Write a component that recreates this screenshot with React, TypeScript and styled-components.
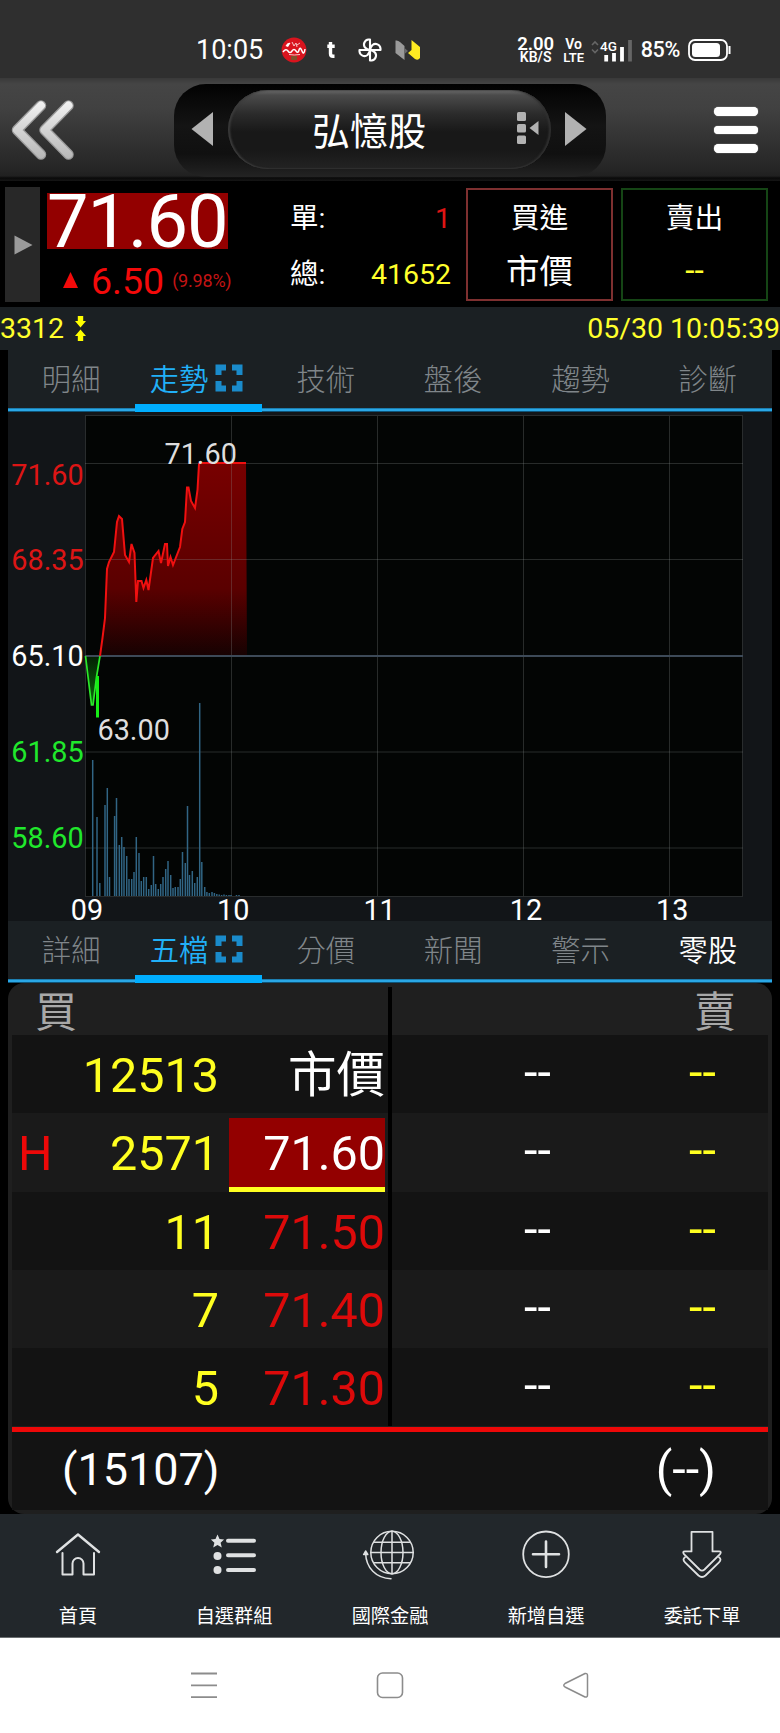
import React from "react";
import styled, { createGlobalStyle } from "styled-components";

const Global = createGlobalStyle`
  * { box-sizing: border-box; }
  body {
    margin: 0;
    background: #000;
    color: #fff;
    font-family: Roboto, "Noto Sans CJK TC", sans-serif;
  }
  svg { display: block; flex: none; overflow: visible; }
`;

const Screen = styled.div`
  width: 780px;
  height: 1733px;
  display: flex;
  flex-direction: column;
  background: #000;
  overflow: hidden;
`;

/* ---------- status bar ---------- */

const StatusBar = styled.div`
  height: 78px;
  flex: none;
  display: flex;
  align-items: center;
  justify-content: space-between;
  padding: 22px 49px 0 196px;
  background: #2f2f2f;
`;

const StatusGroup = styled.div<{ $gap: number }>`
  display: flex;
  align-items: center;
  gap: ${(p) => p.$gap}px;
`;

const Clock = styled.span`
  font-size: 27px;
  line-height: 30px;
  width: 68px;
  margin-right: 5px;
`;

const Stacked = styled.div<{ $top: number; $bottom: number; $width: number }>`
  width: ${(p) => p.$width}px;
  display: flex;
  flex-direction: column;
  align-items: center;
  font-weight: 600;
  white-space: nowrap;
  span:first-child { font-size: ${(p) => p.$top}px; line-height: 14px; }
  span:last-child { font-size: ${(p) => p.$bottom}px; line-height: 13px; }
`;

const BatteryText = styled.span`
  font-size: 21.5px;
  font-weight: 500;
  line-height: 26px;
  letter-spacing: -0.3px;
  margin-right: 2px;
`;

/* ---------- title bar ---------- */

const TitleBar = styled.header`
  height: 103px;
  flex: none;
  display: flex;
  align-items: flex-start;
  padding: 6px 20px 0 9px;
  background: linear-gradient(#393939 0, #454545 6px, #414141 30px, #252525 92px, #202020 98px, #0a0a0a 100px, #151515 103px);
`;

const BackIcon = styled.div`
  width: 165px;
  padding-top: 15px;
`;

const Selector = styled.div`
  width: 432px;
  height: 93px;
  padding: 6px 19px 0 17px;
  border-radius: 32px;
  display: flex;
  justify-content: space-between;
  background: linear-gradient(#020202, #141414 45%, #101010 75%, #232323);
`;

const ArrowSlot = styled.div`
  padding-top: 21px;
`;

const NamePill = styled.div`
  width: 323px;
  height: 79px;
  border-radius: 40px;
  padding: 0 10px 3px 84px;
  margin-left: 1px;
  display: flex;
  align-items: center;
  justify-content: space-between;
  font-size: 38px;
  background: linear-gradient(#6b6b6b 0, #4b4b4b 5px, #2b2b2b 24px, #181818 42px, #181818 60px, #232323);
  box-shadow: inset 2px 0 2px #3b3b3b, inset -2px 0 2px #303030, inset 0 -1px 1px #2c2c2c;
`;

const Hamburger = styled.div`
  width: 44px;
  margin-left: auto;
  padding-top: 23px;
  margin-right: 2px;
  display: flex;
  flex-direction: column;
  gap: 10px;
  span { height: 8.5px; border-radius: 5px; background: #fff; box-shadow: 0 0 1px #fff; }
`;

/* ---------- quote ---------- */

const Quote = styled.section`
  height: 126px;
  flex: none;
  display: flex;
  padding: 6px 12px 5px 5px;
`;

const Expander = styled.div`
  width: 35px;
  height: 115px;
  display: flex;
  align-items: center;
  justify-content: center;
  padding-left: 2px;
  background: #282828;
`;

const PriceColumn = styled.div`
  width: 181px;
  margin: 6px 0 0 7px;
`;

const LastPrice = styled.div`
  height: 56px;
  background: #930000;
  font-size: 74px;
  line-height: 58px;
  letter-spacing: -1.1px;
  white-space: nowrap;
`;

const Change = styled.div`
  height: 64px;
  display: flex;
  align-items: center;
  color: #f40a0a;
  font-size: 37.5px;
  line-height: 44px;
  padding-left: 16px;
  white-space: nowrap;
  svg { margin: 0 13px 3px 0; }
  small { color: #c41414; font-size: 18px; margin-left: 8px; letter-spacing: -0.2px; }
`;

const Volumes = styled.div`
  width: 161px;
  margin-left: 62px;
  padding-top: 3px;
  font-size: 28.5px;
`;

const VolumeRow = styled.div<{ $color: string }>`
  height: 56px;
  display: flex;
  justify-content: space-between;
  line-height: 57px;
  span:last-child { color: ${(p) => p.$color}; }
`;

const TradeBox = styled.div<{ $border: string; $left: number }>`
  width: 147px;
  height: 113px;
  margin: 1px 0 0 ${(p) => p.$left}px;
  border: 2px solid ${(p) => p.$border};
  display: flex;
  flex-direction: column;
  align-items: center;
`;

const TradeTitle = styled.div`
  font-size: 28.8px;
  line-height: 57px;
  height: 53px;
`;

const TradeValue = styled.div<{ $yellow?: boolean }>`
  font-size: 33.5px;
  line-height: ${(p) => (p.$yellow ? 55 : 58)}px;
  color: ${(p) => (p.$yellow ? "#ffff2c" : "#fff")};
`;

const InfoBar = styled.div`
  height: 43px;
  flex: none;
  display: flex;
  align-items: center;
  background: #1b2023;
  color: #ffff2c;
  font-size: 28.5px;
  line-height: 41px;
  svg { margin-left: 11px; }
  time { margin-left: auto; }
`;

/* ---------- tabs ---------- */

const Tabs = styled.nav`
  height: 62px;
  flex: none;
  margin: 0 8px;
  display: grid;
  grid-template-columns: repeat(6, 1fr);
  background: linear-gradient(#1b2023 58px, #0f5478 58px, #2aa7e6 59px, #2aa7e6 61px, #0f5478 61px);
`;

const Tab = styled.div<{ $state: "off" | "on" | "bright" }>`
  height: 62px;
  display: flex;
  justify-content: center;
  align-items: center;
  gap: 7px;
  font-size: 29.3px;
  line-height: 40px;
  font-weight: ${(p) => (p.$state === "off" ? 300 : 350)};
  padding: 0 1px 3px 0;
  color: ${(p) => ({ off: "#80868a", on: "#21b0f8", bright: "#fff" })[p.$state]};
  ${(p) => p.$state === "on" && "padding: 5px 4px 0 0; border-bottom: 8px solid #00aeff; margin-right: 1px;"}
  svg { margin-top: -3px; }
`;

/* ---------- chart ---------- */

const ChartPanel = styled.section`
  height: 509px;
  flex: none;
  margin: 0 8px;
  background: #121518;
`;

/* ---------- order book ---------- */

const Book = styled.section`
  height: 531px;
  flex: none;
  margin: 0 8px;
  padding: 0 4px 4px;
  border-radius: 16px;
  background: #1f1f1f;
`;

const BookHead = styled.div`
  height: 52px;
  display: flex;
  font-size: 42px;
  line-height: 60px;
  color: #a8a8a8;
`;

const HeadSide = styled.div<{ $right?: boolean }>`
  flex: 1;
  height: 52px;
  padding: 0 32px 0 23px;
  text-align: ${(p) => (p.$right ? "right" : "left")};
`;

const HeadDivider = styled.div`
  width: 4px;
  margin-top: 4px;
  background: #000;
`;

const BookRow = styled.div<{ $alt: boolean }>`
  height: 78.3px;
  display: grid;
  grid-template-rows: 78.3px;
  grid-template-columns: 60px 147px 10px 156px 3px 4px 220px 156px;
  background: ${(p) => (p.$alt ? "#1a1a1a" : "#131313")};
  font-size: 48.5px;
  line-height: 82px;
`;

const Mark = styled.div`
  color: #ee0808;
  padding-left: 6px;
`;

const Amount = styled.div`
  color: #ffff20;
  text-align: right;
`;

const Price = styled.div<{ $kind: "market" | "hit" | "up" }>`
  text-align: right;
  color: ${(p) => (p.$kind === "up" ? "#dc0a0a" : "#fff")};
  ${(p) => p.$kind === "hit" && "margin-top: 5px; line-height: 72px; background: #930000; border-bottom: 5px solid #ffff20;"}
`;

const Divider = styled.div`
  background: #000;
`;

const Dash = styled.div<{ $yellow?: boolean }>`
  line-height: 75px;
  padding-left: ${(p) => (p.$yellow ? 77 : 71)}px;
  text-align: ${(p) => (p.$yellow ? "left" : "center")};
  color: ${(p) => (p.$yellow ? "#ffff20" : "#fff")};
`;

const Totals = styled.div`
  height: 83.5px;
  border-top: 5px solid #ee0808;
  margin-top: 0.5px;
  background: #131313;
  display: flex;
  justify-content: space-between;
  padding: 0 52px 0 50px;
  font-size: 45px;
  line-height: 75px;
  span:last-child { font-size: 48.5px; }
`;

/* ---------- bottom navigation ---------- */

const AppNav = styled.nav`
  height: 124px;
  flex: none;
  display: grid;
  grid-template-columns: repeat(5, 1fr);
  background: #22272b;
  border-bottom: 1px solid #6a6e70;
`;

const NavItem = styled.div`
  display: flex;
  flex-direction: column;
  align-items: center;
  padding-top: 12px;
  font-size: 19.2px;
  line-height: 26px;
  svg { margin-bottom: 26px; }
`;

const SystemNav = styled.div`
  flex: 1;
  display: flex;
  justify-content: center;
  align-items: flex-start;
  gap: 156px;
  padding-top: 32px;
  background: #fff;
`;

const Expand = () => (
  <svg width="28" height="28" viewBox="0 0 28 28" fill="none" stroke="#1a8bcb" strokeWidth="6">
    <path d="M11 3.5H3.5V11M17 3.5H24.5V11M3.5 17V24.5H11M24.5 17V24.5H17" />
  </svg>
);

const TabStrip = ({ labels, bright }: { labels: string[]; bright?: number }) => (
  <Tabs>
    {labels.map((l, i) => (
      <Tab key={l} $state={i === 1 ? "on" : i === bright ? "bright" : "off"}>
        {l}
        {i === 1 && <Expand />}
      </Tab>
    ))}
  </Tabs>
);

const LINE =
  "100,656 102.5,638 105,618 107,569 109,562 114,552 117,522 119,516 122,519 125,555 129,562 131.5,544 134.5,553 136.3,602 138,581 141.5,581 143.5,588 146.3,580 148.5,590 153,558 158.5,551 161,563 165,544 167,544 168,566 170.5,557 173,565 180,547 182.3,529 185,522 187,487.5 188.5,487.5 191,501 195,508 197.5,490 199,464 200,463 246,463";

/* [x, top] of every volume bar */
const BARS: number[][] = [
  [92.7, 760], [97, 817], [99.8, 883], [105, 805], [107.3, 788], [109.5, 877], [114.6, 816], [116.5, 798],
  [119.3, 845], [121.7, 837], [124, 847], [126.7, 856], [129, 879], [131.7, 879], [134, 872], [136.3, 837],
  [139, 853], [141.3, 881], [143.7, 877], [146.3, 877], [148.7, 889], [151.3, 885], [153.5, 856], [155.7, 884],
  [158.3, 889], [160.7, 884], [163, 877], [165.7, 869], [168, 861], [170.7, 875], [173, 888], [175.3, 887],
  [178, 887], [180.3, 879], [182.5, 852], [185.3, 863], [187.5, 806], [189.5, 875], [192.3, 871], [194.7, 883],
  [197.3, 877], [199.7, 703], [201.8, 862], [204.7, 887], [206.9, 892], [209.3, 893], [212, 892], [214.4, 893],
  [216.8, 894], [219.2, 894.5], [221.6, 895], [224, 894.5], [226.4, 895], [229, 895], [231, 895], [236.5, 895], [239, 895],
];

const Y_LABELS: [string, number, string][] = [
  ["71.60", 484.5, "#dc1515"],
  ["68.35", 569.5, "#dc1515"],
  ["65.10", 665.5, "#ffffff"],
  ["61.85", 761.5, "#20e82c"],
  ["58.60", 847.5, "#20e82c"],
];

const TrendChart = () => (
  <svg width="764" height="509" viewBox="8 412 764 509" fontSize="28.8">
    <defs>
      <linearGradient id="rise" x1="0" y1="463" x2="0" y2="656" gradientUnits="userSpaceOnUse">
        <stop offset="0" stopColor="#780000" />
        <stop offset="0.65" stopColor="#5a0000" />
        <stop offset="1" stopColor="#160202" />
      </linearGradient>
      <linearGradient id="fall" x1="0" y1="656" x2="0" y2="706" gradientUnits="userSpaceOnUse">
        <stop offset="0" stopColor="#032003" />
        <stop offset="1" stopColor="#0c6b0c" />
      </linearGradient>
    </defs>
    <rect x="85.5" y="415.5" width="657" height="481" fill="#030504" stroke="#292c2d" />
    <polygon points={`${LINE} 247,656`} fill="url(#rise)" />
    <polygon points="85,656 91.5,705 93,705 100,656" fill="url(#fall)" />
    <g stroke="#8a8f90" strokeOpacity="0.28">
      {[463.5, 559.5, 752, 848].map((y) => <line key={y} x1="85" x2="743" y1={y} y2={y} />)}
      {[231.5, 377.5, 523.5, 669.5].map((x) => <line key={x} x1={x} x2={x} y1="416" y2="896" />)}
    </g>
    <line x1="85" x2="743" y1="656" y2="656" stroke="#3d4a58" strokeWidth="1.8" />
    {BARS.map(([x, top]) => (
      <line key={x} x1={x} x2={x} y1={top} y2="896" stroke="#316584" strokeWidth="1.5" />
    ))}
    <polyline points={LINE} fill="none" stroke="#f01010" strokeWidth="2" />
    <polyline points="85.5,656 91.5,705 93,705 96.5,677 100,656" fill="none" stroke="#2be82b" strokeWidth="1.7" />
    <line x1="97.5" x2="97.5" y1="676" y2="717.5" stroke="#16ee16" strokeWidth="3" />
    <text x="164.5" y="463.5" fill="#dedede">71.60</text>
    <text x="97.5" y="739.5" fill="#dedede">63.00</text>
    {Y_LABELS.map(([t, y, c]) => (
      <text key={t} x="83.7" y={y} fill={c} textAnchor="end">{t}</text>
    ))}
    {["09", "10", "11", "12", "13"].map((t, i) => (
      <text key={t} x={87 + i * 146.3} y="919.5" fill="#fff" textAnchor="middle">{t}</text>
    ))}
  </svg>
);

const ROWS: { mark?: string; qty: string; price: string; kind: "market" | "hit" | "up" }[] = [
  { qty: "12513", price: "市價", kind: "market" },
  { mark: "H", qty: "2571", price: "71.60", kind: "hit" },
  { qty: "11", price: "71.50", kind: "up" },
  { qty: "7", price: "71.40", kind: "up" },
  { qty: "5", price: "71.30", kind: "up" },
];

const stroke = { fill: "none", stroke: "#dfe1e2", strokeLinecap: "round", strokeLinejoin: "round" } as const;

const NAV: [string, React.ReactNode][] = [
  ["首頁", (
    <g {...stroke} strokeWidth="2.4">
      <path d="M5 26L26 8.5L47 26" />
      <path d="M10.5 27V48.5H20.5V37.5a5.5 5.5 0 0 1 11 0V48.5H42V27" strokeWidth="2" />
    </g>
  )],
  ["自選群組", (
    <g fill="#dfe1e2">
      <path d="M9.5 8.5l2 4.6 4.6.4-3.5 3.2 1.2 4.8-4.3-2.6-4.3 2.6 1.2-4.8-3.5-3.2 4.6-.4z" />
      <circle cx="9.5" cy="30" r="4" />
      <circle cx="9.5" cy="44" r="4" />
      <path {...stroke} strokeWidth="4" d="M20 14.7H46M20 29.3H46M20 44H46" />
    </g>
  )],
  ["國際金融", (
    <g {...stroke} strokeWidth="1.5">
      <circle cx="28" cy="26.5" r="21.2" />
      <ellipse cx="28" cy="26.5" rx="11" ry="21.2" />
      <path d="M28 5.3V47.7M6.8 26.5H49.2M10.5 16.3H45.5M10.5 36.7H45.5" />
      <path d="M27 52.8C12 52.3 2 42 1.6 27" />
      <path d="M-.4 28.5L1.6 25L3.8 28.5Z" fill="#dfe1e2" />
    </g>
  )],
  ["新增自選", (
    <g {...stroke} strokeWidth="1.8">
      <circle cx="26" cy="28.3" r="22.8" />
      <path d="M26 15.5V41M13 28.3H39" strokeWidth="2.6" />
    </g>
  )],
  ["委託下單", (
    <g {...stroke} strokeWidth="1.8">
      <path d="M15.5 5.8H36.5V25.4H43q3 0 1 2.8L28.5 43.5q-2.5 2.3-5 0L8 28.2q-2-2.8 1-2.8H15.5Z" />
      <path d="M9 31.3q-3 2 0 5L22.5 49.5q3.5 3 7 0L43 36.3q3-3 0-5" />
    </g>
  )],
];

export default function App() {
  return (
    <Screen>
      <Global />
      <StatusBar>
        <StatusGroup $gap={12}>
          <Clock>10:05</Clock>
          <svg width="26" height="26" viewBox="0 0 26 26">
            <circle cx="13" cy="13" r="12.4" fill="#d9141e" />
            <path d="M4.500 9q2-4 5-3l-2.500 4z" fill="#fff" />
            <path d="M2 15q3-4 5-1t4 0 4 0 3-1 3 1 3-2" fill="none" stroke="#fff" strokeWidth="1.5" />
            <path d="M11 5l2 4 2-3 1 4M16 8l3-2M8 17.500q5 1 11 0" fill="none" stroke="#f6c6c6" strokeWidth="1" />
            <rect x="10" y="19" width="6" height="4" fill="#80502a" />
          </svg>
          <svg width="26" height="26" viewBox="0 0 26 26" fill="none" stroke="#fff" strokeWidth="3.4">
            <path d="M11.500 5V16.5Q11.500 19.300 14 19.300H15.500M8.300 9.2H15.700" />
          </svg>
          <svg width="26" height="26" viewBox="0 0 26 26" fill="none" stroke="#fff" strokeWidth="2.100" strokeLinejoin="round">
            <path d="M13 13V2.500H11.500A5 5 0 0 0 8 10.500Q10 12.500 13 13M13 13H23.500V11.500A5 5 0 0 0 15.500 8Q13.500 10 13 13M13 13V23.500H14.500A5 5 0 0 0 18 15.500Q16 13.500 13 13M13 13H2.500V14.500A5 5 0 0 0 10.500 18Q12.500 16 13 13" />
          </svg>
          <svg width="26" height="26" viewBox="0 0 26 26">
            <path d="M.5 3.500Q3 3 5 5L9.500 9V23L.5 16Z" fill="#9a9a9a" />
            <path d="M16.500 3L25 10V21Q23 24 20 22L13 16L16.500 13Z" fill="#ffeb22" />
            <path d="M9.500 11L13 14L9.500 17Z" fill="#6a6a6a" />
          </svg>
        </StatusGroup>
        <StatusGroup $gap={6}>
          <Stacked $top={18.5} $bottom={14} $width={38}>
            <span>2.00</span>
            <span>KB/S</span>
          </Stacked>
          <Stacked $top={14} $bottom={13} $width={26}>
            <span>Vo</span>
            <span>LTE</span>
          </Stacked>
          <svg width="42" height="26" viewBox="0 0 42 26">
            <path d="M-1 8L2 5L5 8M-1 12.500L2 15.500L5 12.500" fill="none" stroke="#666" strokeWidth="1.6" />
            <text x="7" y="13.500" fontSize="13.500" fontWeight="500" fill="#fff">4G</text>
            <g strokeWidth="3.800" stroke="#fff">
              <path d="M13.200 18V24.500M21 16V24.500M29 10V24.500" />
              <path d="M37 3V24.500" stroke="#666" />
            </g>
          </svg>
          <BatteryText>85%</BatteryText>
          <svg width="43" height="24" viewBox="0 0 43 24">
            <rect x="1" y="2" width="38" height="20" rx="6" fill="none" stroke="#fff" strokeWidth="1.800" />
            <rect x="4" y="5" width="28" height="14" rx="3.500" fill="#fff" />
            <rect x="40.500" y="8" width="2" height="8" fill="#fff" />
          </svg>
        </StatusGroup>
      </StatusBar>

      <TitleBar>
        <BackIcon>
          <svg width="68" height="62" viewBox="0 0 68 62" fill="none">
            <defs>
              <linearGradient id="chev" x1="0" y1="0" x2="0" y2="62" gradientUnits="userSpaceOnUse">
                <stop offset="0" stopColor="#f4f4f4" />
                <stop offset="1" stopColor="#b5b5b5" />
              </linearGradient>
            </defs>
            <g strokeLinecap="round" strokeLinejoin="round">
              <path d="M32 6.500L8 31L32 55.500M59.500 6.500L35.500 31L59.500 55.500" stroke="#9a9a9a" strokeWidth="10.500" />
              <path d="M32 6.500L8 31L32 55.500M59.500 6.500L35.500 31L59.500 55.500" stroke="url(#chev)" strokeWidth="8" />
            </g>
          </svg>
        </BackIcon>
        <Selector>
          <ArrowSlot>
            <svg width="23" height="36"><path d="M0.500 18L22 1V35Z" fill="#b2b2b2" /></svg>
          </ArrowSlot>
          <NamePill>
            <span>弘憶股</span>
            <svg width="24" height="34" viewBox="0 0 24 34" fill="#b2b2b2">
              <rect x="0" y="1" width="9" height="9" rx="1.500" />
              <rect x="0" y="13" width="9" height="8.500" rx="1.500" />
              <rect x="0" y="24.500" width="9" height="8.500" rx="1.500" />
              <path d="M12.500 17L21.500 10V24Z" />
            </svg>
          </NamePill>
          <ArrowSlot>
            <svg width="23" height="36"><path d="M22.500 18L1 1V35Z" fill="#b2b2b2" /></svg>
          </ArrowSlot>
        </Selector>
        <Hamburger><span /><span /><span /></Hamburger>
      </TitleBar>

      <Quote>
        <Expander>
          <svg width="19" height="20"><path d="M.5 .5L18.500 10L.5 19.500Z" fill="#9a9a9a" /></svg>
        </Expander>
        <PriceColumn>
          <LastPrice>71.60</LastPrice>
          <Change>
            <svg width="15" height="16"><path d="M7.500 0L15 16H0Z" fill="#f40a0a" /></svg>
            6.50<small>(9.98%)</small>
          </Change>
        </PriceColumn>
        <Volumes>
          <VolumeRow $color="#e01414"><span>單:</span><span>1</span></VolumeRow>
          <VolumeRow $color="#ffff2c"><span>總:</span><span>41652</span></VolumeRow>
        </Volumes>
        <TradeBox $border="#7e3030" $left={15}>
          <TradeTitle>買進</TradeTitle>
          <TradeValue>市價</TradeValue>
        </TradeBox>
        <TradeBox $border="#154515" $left={8}>
          <TradeTitle>賣出</TradeTitle>
          <TradeValue $yellow>--</TradeValue>
        </TradeBox>
      </Quote>

      <InfoBar>
        <span>3312</span>
        <svg width="11" height="25" viewBox="0 0 11 25" fill="#ffff00">
          <path d="M2.800 0H8.200V5H11L5.500 11.500L0 5H2.800ZM2.800 25H8.200V20H11L5.500 13.500L0 20H2.800Z" />
        </svg>
        <time>05/30 10:05:39</time>
      </InfoBar>

      <TabStrip labels={["明細", "走勢", "技術", "盤後", "趨勢", "診斷"]} />
      <ChartPanel><TrendChart /></ChartPanel>
      <TabStrip labels={["詳細", "五檔", "分價", "新聞", "警示", "零股"]} bright={5} />

      <Book>
        <BookHead>
          <HeadSide>買</HeadSide>
          <HeadDivider />
          <HeadSide $right>賣</HeadSide>
        </BookHead>
        {ROWS.map((r, i) => (
          <BookRow key={r.qty} $alt={i % 2 === 1}>
            <Mark>{r.mark}</Mark>
            <Amount>{r.qty}</Amount>
            <span />
            <Price $kind={r.kind}>{r.price}</Price>
            <span />
            <Divider />
            <Dash>--</Dash>
            <Dash $yellow>--</Dash>
          </BookRow>
        ))}
        <Totals>
          <span>(15107)</span>
          <span>(--)</span>
        </Totals>
      </Book>

      <AppNav>
        {NAV.map(([label, icon]) => (
          <NavItem key={label}>
            <svg width="52" height="52" viewBox="0 0 52 52">{icon}</svg>
            {label}
          </NavItem>
        ))}
      </AppNav>

      <SystemNav>
        <svg width="30" height="30" viewBox="0 0 30 30" stroke="#8c8c8c" strokeWidth="1.800">
          <path d="M2 3.500H28M2 15.300H28M2 27.200H28" />
        </svg>
        <svg width="30" height="30" viewBox="0 0 30 30" fill="none" stroke="#8c8c8c" strokeWidth="1.600">
          <rect x="2.500" y="3" width="25" height="24.500" rx="5" />
        </svg>
        <svg width="30" height="30" viewBox="0 0 30 30" fill="none" stroke="#8c8c8c" strokeWidth="1.500" strokeLinejoin="round">
          <path d="M4 13.500L24 3.500Q26.500 3 26.500 5.500V25Q26.500 27.500 24 27L4 17Q1.500 15.300 4 13.500Z" />
        </svg>
      </SystemNav>
    </Screen>
  );
}
